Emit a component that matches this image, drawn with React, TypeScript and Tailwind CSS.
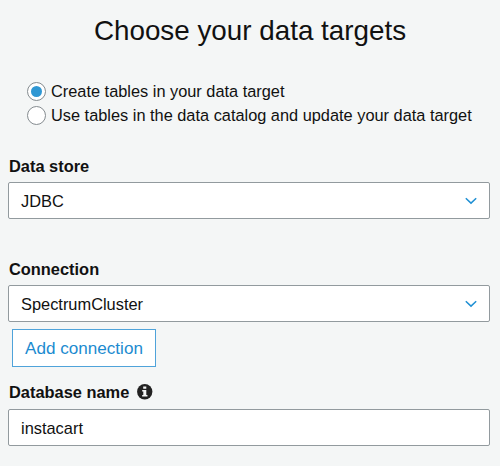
import { useState } from "react";

function Chevron() {
  return (
    <svg className="mr-3 h-2 w-3 shrink-0" viewBox="0 0 12 8" fill="none" stroke="#2090d4" strokeWidth="1.5">
      <path d="M0.8 1.2 L6 6.1 L11.2 1.2" />
    </svg>
  );
}

function Radio({ label, checked, onSelect }: { label: string; checked: boolean; onSelect: () => void }) {
  return (
    <div role="radio" aria-checked={checked} onClick={onSelect} className="flex h-6 items-center">
      <span className="flex size-[19px] shrink-0 items-center justify-center rounded-full border border-[#858c90] bg-white">
        {checked && <span className="size-[11px] rounded-full bg-[#2f97d3]" />}
      </span>
      <span className="ml-[5px] text-[16.35px] leading-6 whitespace-nowrap">{label}</span>
    </div>
  );
}

function Select({ value }: { value: string }) {
  return (
    <div className="flex h-[37px] w-[482px] items-center justify-between rounded-xs border border-[#929a9e] bg-white pl-3">
      <span className="text-[16.4px] leading-6">{value}</span>
      <Chevron />
    </div>
  );
}

function InfoIcon() {
  return (
    <svg className="ml-2 size-[15.5px]" viewBox="0 0 15 15">
      <circle cx="7.5" cy="7.5" r="7.4" fill="#222" />
      <path d="M6 2.4h3v2.3H6zM5 5.8h4v4.9h1.1v1.5H5v-1.5h1.1V7.2H5z" fill="#f4f6f6" />
    </svg>
  );
}

export default function App() {
  const [choice, setChoice] = useState(0);
  return (
    <main className="h-[466px] w-[500px] overflow-hidden bg-[#f4f6f6] pl-2 font-['Liberation_Sans',Arial,sans-serif] text-[#111]">
      <h1 className="-ml-2 pt-[15px] text-center text-[27.8px] leading-8">Choose your data targets</h1>
      <div role="radiogroup" className="mt-[32px] ml-[19px]">
        <Radio label="Create tables in your data target" checked={choice === 0} onSelect={() => setChoice(0)} />
        <Radio label="Use tables in the data catalog and update your data target" checked={choice === 1} onSelect={() => setChoice(1)} />
      </div>
      <h2 className="mt-[27px] mb-[4px] pl-px text-[16.4px] leading-6 font-bold">Data store</h2>
      <Select value="JDBC" />
      <h2 className="mt-[38px] mb-[4px] pl-px text-[16.4px] leading-6 font-bold">Connection</h2>
      <Select value="SpectrumCluster" />
      <button className="mt-[7px] ml-[4px] block h-[38px] w-[144px] border border-[#4fa3da] bg-white pt-[2px] text-[17.1px] leading-6 text-[#1c8bd0]">
        Add connection
      </button>
      <h2 className="mt-[13px] mb-[5px] flex items-center pl-px text-[16.4px] leading-6 font-bold">
        Database name
        <InfoIcon />
      </h2>
      <input
        className="block h-[37px] w-[482px] rounded-xs border border-[#929a9e] bg-white pt-px pl-3 text-[16.4px] leading-6 outline-none"
        defaultValue="instacart"
      />
    </main>
  );
}
